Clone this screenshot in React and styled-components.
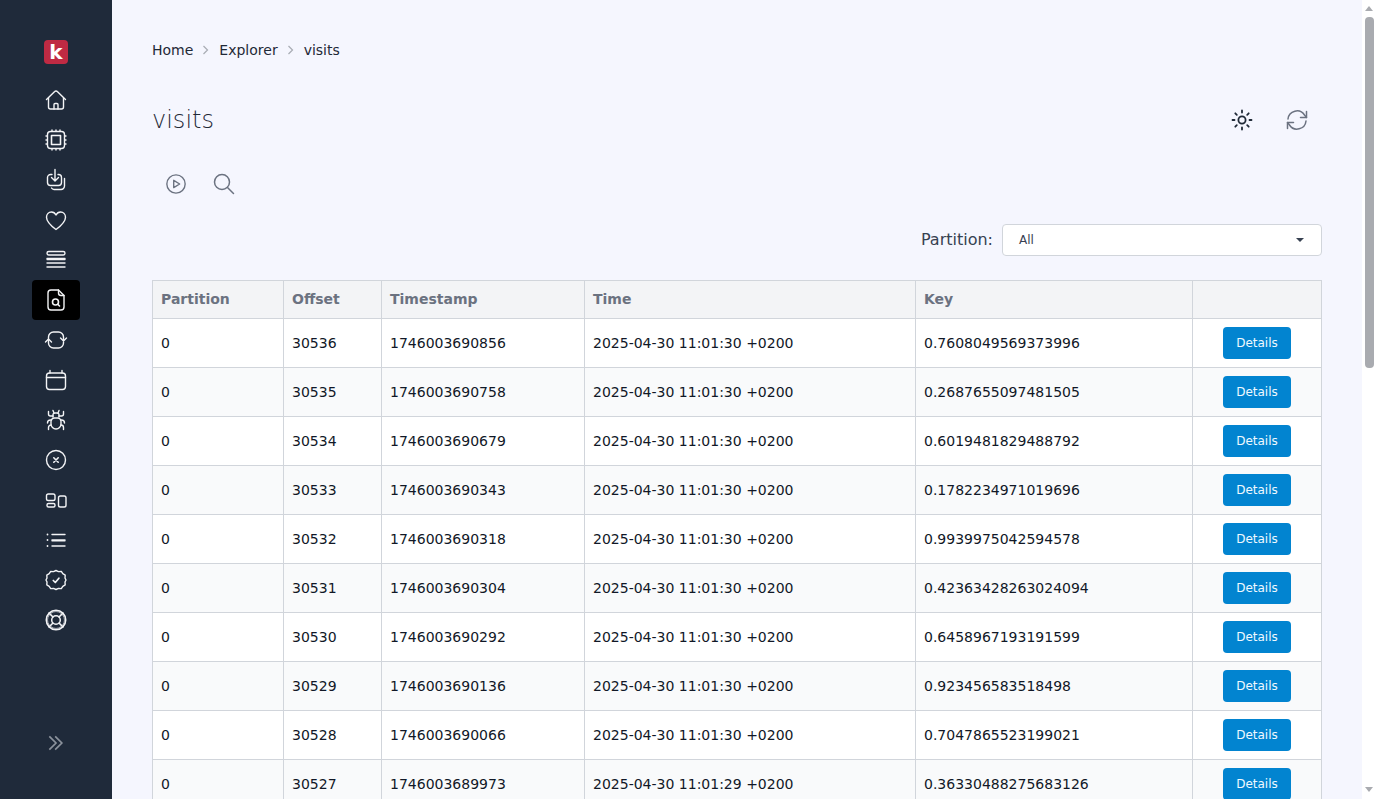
import React from 'react';
import styled, { createGlobalStyle } from 'styled-components';

const GlobalStyle = createGlobalStyle`
	html, body {
		margin: 0;
		padding: 0;
		height: 100%;
		overflow: hidden;
		background: #f5f6fe;
		font-family: "DejaVu Sans", sans-serif;
	}
`;

function Svg({ children }) {
	return (
		<svg width="24" height="24" viewBox="0 0 24 24" fill="none" stroke="currentColor" strokeWidth="1.4" strokeLinecap="round" strokeLinejoin="round">
			{children}
		</svg>
	);
}

const navIcons = [
	<Svg key="home">
		<path d="M2.500 11.500 10.700 3.500a1.800 1.800 0 0 1 2.600 0L21.500 11.500" />
		<path d="M4.500 10v9a2 2 0 0 0 2 2h11a2 2 0 0 0 2-2v-9" />
		<path d="M10 21v-4.500a1 1 0 0 1 1-1h2a1 1 0 0 1 1 1V21" />
	</Svg>,
	<Svg key="cpu">
		<rect x="3.500" y="3.500" width="17" height="17" rx="3" />
		<rect x="7.500" y="7.500" width="9" height="9" strokeWidth="1.600" />
		<path d="M8 2v1M12 2v1M16 2v1M8 21v1M12 21v1M16 21v1M2 8h1M2 12h1M2 16h1M21 8h1M21 12h1M21 16h1" />
	</Svg>,
	<Svg key="import">
		<path d="M8 6.500H6.500a3 3 0 0 0-3 3v5a3 3 0 0 0 3 3h8a3 3 0 0 0 3-3v-5a3 3 0 0 0-3-3H14" />
		<path d="M11 1.500v11M7.500 9.500l3.500 3.500 3.500-3.500" />
		<path d="M20.500 10.500v7.500a3.500 3.500 0 0 1-3.500 3.500h-7a3 3 0 0 1-2.500-1.500" />
	</Svg>,
	<Svg key="heart">
		<path d="M12 21.500C6 17 2.500 13.500 2.500 9.200 2.500 6 4.800 4 7.400 4c2 0 3.600 1 4.600 3 1-2 2.600-3 4.600-3 2.600 0 4.900 2 4.900 5.200 0 4.300-3.500 7.800-9.500 12.300z" />
	</Svg>,
	<Svg key="stack">
		<rect x="3" y="3.500" width="18" height="3.500" rx="1.750" />
		<path d="M3 10.500h18M3 11.500h18M3 15h18M3 19h18" />
	</Svg>,
	<Svg key="file-search">
		<path d="M14.500 2H7a3 3 0 0 0-3 3v14a3 3 0 0 0 3 3h10a3 3 0 0 0 3-3V7.500z" />
		<path d="M14.500 2v3a2.500 2.500 0 0 0 2.500 2.500h3" />
		<circle cx="11.500" cy="14" r="3" strokeWidth="1.600" />
		<path d="M13.800 16.300 15.500 18" strokeWidth="1.600" />
	</Svg>,
	<Svg key="sync">
		<path d="M4.500 10.500V9a5 5 0 0 1 5-5h5a5 5 0 0 1 5 5v3.500" />
		<path d="M16.500 10l3 3 3-3" />
		<path d="M19.500 14v1a5 5 0 0 1-5 5h-5a5 5 0 0 1-5-5v-3.500" />
		<path d="M1.500 14l3-3 3 3" />
	</Svg>,
	<Svg key="calendar">
		<rect x="2.500" y="5" width="19" height="16.500" rx="3" />
		<path d="M2.500 9.500h19M6 2.500V5M18 2.500V5" />
	</Svg>,
	<Svg key="bug">
		<path d="M9 9V6.800A1.800 1.800 0 0 1 10.800 5h2.400A1.800 1.800 0 0 1 15 6.800V9" />
		<path d="M7 13.500A3.500 3.500 0 0 1 10.500 10h3a3.500 3.500 0 0 1 3.500 3.500v2.500a5 5 0 0 1-10 0z" />
		<path d="M9 2.500 10 5M15 2.500 14 5M4.500 3.500v2.500a2 2 0 0 0 2 2H9M19.500 3.500v2.500a2 2 0 0 1-2 2H15M3.500 15a3 3 0 0 1 3-3H7.500M20.500 15a3 3 0 0 0-3-3h-1M4.500 21.500v-2a2.500 2.500 0 0 1 2.500-2.500M19.500 21.500v-2a2.500 2.500 0 0 0-2.500-2.500" />
	</Svg>,
	<Svg key="x-circle">
		<circle cx="12" cy="12" r="9.500" />
		<path d="M9.800 9.800l4.400 4.400M14.200 9.800l-4.400 4.400" strokeWidth="1.600" />
	</Svg>,
	<Svg key="layout">
		<rect x="2.500" y="6" width="8.500" height="6.500" rx="1.800" />
		<rect x="3" y="15.500" width="8" height="3.500" rx="1.500" />
		<rect x="14.500" y="8" width="7.500" height="11" rx="1.800" />
	</Svg>,
	<Svg key="list">
		<path d="M8 6.500h13M8 12h13M8 12.800h13M8 18h13" />
		<path d="M3.500 6.500h.01M3.500 12h.01M3.500 18h.01" strokeWidth="1.800" />
	</Svg>,
	<Svg key="check">
		<path d="M12 2.500l2.500 1.100 2.800-.2 1.500 2.300 2.400 1.500-.2 2.800 1 2-1 2 .2 2.800-2.400 1.500-1.500 2.300-2.800-.2-2.500 1.100-2.500-1.100-2.800.2-1.500-2.300-2.400-1.500.2-2.800-1-2 1-2-.2-2.800 2.400-1.500 1.500-2.300 2.800.2z" />
		<path d="M9.300 12.500l2 2 3.600-4.300" strokeWidth="1.700" />
	</Svg>,
	<Svg key="support">
		<circle cx="12" cy="12" r="9.700" strokeWidth="1.600" />
		<circle cx="12" cy="12" r="4.300" strokeWidth="1.500" />
		<path d="M5.100 5.100 9 9M18.900 5.100 15 9M5.100 18.900 9 15M18.900 18.900 15 15" strokeWidth="1.500" />
		<path d="M7 5.300a8.300 8.300 0 0 1 10 0M7 18.700a8.300 8.300 0 0 0 10 0M5.300 7a8.300 8.300 0 0 0 0 10M18.700 7a8.300 8.300 0 0 1 0 10" strokeWidth=".6" />
	</Svg>,
];

const rows = [
	['0', '30536', '1746003690856', '2025-04-30 11:01:30 +0200', '0.7608049569373996'],
	['0', '30535', '1746003690758', '2025-04-30 11:01:30 +0200', '0.2687655097481505'],
	['0', '30534', '1746003690679', '2025-04-30 11:01:30 +0200', '0.6019481829488792'],
	['0', '30533', '1746003690343', '2025-04-30 11:01:30 +0200', '0.1782234971019696'],
	['0', '30532', '1746003690318', '2025-04-30 11:01:30 +0200', '0.9939975042594578'],
	['0', '30531', '1746003690304', '2025-04-30 11:01:30 +0200', '0.42363428263024094'],
	['0', '30530', '1746003690292', '2025-04-30 11:01:30 +0200', '0.6458967193191599'],
	['0', '30529', '1746003690136', '2025-04-30 11:01:30 +0200', '0.923456583518498'],
	['0', '30528', '1746003690066', '2025-04-30 11:01:30 +0200', '0.7047865523199021'],
	['0', '30527', '1746003689973', '2025-04-30 11:01:29 +0200', '0.36330488275683126'],
];

const columns = ['Partition', 'Offset', 'Timestamp', 'Time', 'Key', ''];

export default function App() {
	return (
		<Layout>
			<GlobalStyle />
			<Sidebar>
				<Logo>k</Logo>
				<NavList>
					{navIcons.map((icon, i) => (
						<NavItem key={i} $active={i === 5}>
							{icon}
						</NavItem>
					))}
				</NavList>
				<CollapseButton>
					<svg width="20" height="20" viewBox="0 0 24 24" fill="none" stroke="currentColor" strokeWidth="2">
						<path d="M4 4l8 8-8 8M11 4l8 8-8 8" />
					</svg>
				</CollapseButton>
			</Sidebar>
			<Main>
				<Breadcrumbs>
					<span>Home</span>
					<Chevron />
					<span>Explorer</span>
					<Chevron />
					<span>visits</span>
				</Breadcrumbs>
				<TitleRow>
					<Title>visits</Title>
					<TitleActions>
						<IconButton $dark>
							<svg width="24" height="24" viewBox="0 0 24 24" fill="none" stroke="currentColor" strokeWidth="1.800" strokeLinecap="round">
								<circle cx="12" cy="12" r="3.600" />
								<path d="M12 2.500v2M12 19.500v2M2.500 12h2M19.500 12h2M5.300 5.300l1.500 1.500M17.200 17.200l1.500 1.500M5.300 18.700l1.500-1.500M17.200 6.800l1.500-1.500" />
							</svg>
						</IconButton>
						<IconButton>
							<svg width="24" height="24" viewBox="0 0 24 24" fill="none" stroke="currentColor" strokeWidth="1.500" strokeLinecap="round" strokeLinejoin="round">
								<path d="M3 11a9 9 0 0 1 16.500-4L21.500 9.500" />
								<path d="M21.500 3.500v6h-6" />
								<path d="M21 13a9 9 0 0 1-16.500 4l-2-2.500" />
								<path d="M2.500 20.500v-6h6" />
							</svg>
						</IconButton>
					</TitleActions>
				</TitleRow>
				<Toolbar>
					<ToolButton>
						<svg width="22" height="22" viewBox="0 0 24 24" fill="none" stroke="currentColor" strokeWidth="1.500" strokeLinejoin="round">
							<circle cx="12" cy="12" r="10" />
							<path d="M9.500 8v8l6.500-4z" />
						</svg>
					</ToolButton>
					<ToolButton>
						<svg width="24" height="24" viewBox="0 0 24 24" fill="none" stroke="currentColor" strokeWidth="1.500" strokeLinecap="round">
							<circle cx="10" cy="10" r="7.500" />
							<path d="M15.500 15.500l6 6" />
						</svg>
					</ToolButton>
				</Toolbar>
				<FilterRow>
					<FilterLabel>Partition:</FilterLabel>
					<Select>
						All
						<Caret />
					</Select>
				</FilterRow>
				<Table>
					<colgroup>
						<col width="131" />
						<col width="98" />
						<col width="203" />
						<col width="331" />
						<col width="277" />
						<col />
					</colgroup>
					<thead>
						<tr>
							{columns.map((c, i) => (
								<Th key={i}>{c}</Th>
							))}
						</tr>
					</thead>
					<tbody>
						{rows.map((row) => (
							<Row key={row[1]}>
								{row.map((value, i) => (
									<Td key={i}>{value}</Td>
								))}
								<ActionCell>
									<DetailsButton>Details</DetailsButton>
								</ActionCell>
							</Row>
						))}
					</tbody>
				</Table>
			</Main>
			<ScrollTrack>
				<ScrollArrow />
				<ScrollThumb />
				<ScrollArrow $down />
			</ScrollTrack>
		</Layout>
	);
}

function Chevron() {
	return (
		<ChevronIcon width="8" height="10" viewBox="0 0 8 10" fill="none" stroke="currentColor" strokeWidth="1.200">
			<path d="M1.500 1l4 4-4 4" />
		</ChevronIcon>
	);
}

const Layout = styled.div`
	display: flex;
	height: 100vh;
	overflow: hidden;
`;

const Sidebar = styled.nav`
	flex: 0 0 112px;
	box-sizing: border-box;
	display: flex;
	flex-direction: column;
	align-items: center;
	padding: 40px 0 46px;
	background: #1f2a3a;
	color: #f3f4f6;
`;

const Logo = styled.div`
	width: 24px;
	height: 24px;
	border-radius: 4px;
	background: #bf2a43;
	color: #ffffff;
	display: flex;
	align-items: center;
	justify-content: center;
	font: 700 20px/24px "DejaVu Sans", sans-serif;
`;

const NavList = styled.div`
	display: flex;
	flex-direction: column;
	margin-top: 16px;
`;

const NavItem = styled.div`
	width: 48px;
	height: 40px;
	display: flex;
	align-items: center;
	justify-content: center;
	border-radius: 4px;
	background: ${(props) => (props.$active ? '#000000' : 'transparent')};
`;

const CollapseButton = styled.div`
	margin-top: auto;
	height: 20px;
	color: #8b929c;

	svg {
		display: block;
	}
`;

const Main = styled.main`
	flex: 1;
	min-width: 0;
	box-sizing: border-box;
	padding: 40px 40px 0;
	overflow: hidden;
`;

const Breadcrumbs = styled.div`
	display: flex;
	align-items: center;
	height: 20px;
	font-size: 14px;
	line-height: 20px;
	color: #1f2937;
`;

const ChevronIcon = styled.svg`
	margin: 0 9px 0 9px;
	color: #a8acb3;
`;

const TitleRow = styled.div`
	display: flex;
	align-items: center;
	justify-content: space-between;
	margin-top: 36px;
	height: 48px;
`;

const Title = styled.h1`
	margin: 0;
	font-family: "DejaVu Sans", sans-serif;
	font-size: 24px;
	font-weight: 200;
	line-height: 32px;
	color: #1f2937;
`;

const TitleActions = styled.div`
	display: flex;
	align-items: center;
	gap: 31px;
	padding-right: 13px;
`;

const IconButton = styled.div`
	display: flex;
	color: ${(props) => (props.$dark ? '#1f2937' : '#6b7280')};
`;

const Toolbar = styled.div`
	display: flex;
	align-items: center;
	gap: 25px;
	margin-top: 24px;
	padding-left: 13px;
	height: 32px;
	color: #6b7280;
`;

const ToolButton = styled.div`
	display: flex;
`;

const FilterRow = styled.div`
	display: flex;
	align-items: center;
	justify-content: flex-end;
	gap: 9px;
	margin-top: 24px;
`;

const FilterLabel = styled.span`
	padding-bottom: 2px;
	font-size: 16px;
	color: #374151;
`;

const Select = styled.div`
	width: 320px;
	height: 32px;
	box-sizing: border-box;
	display: flex;
	align-items: center;
	justify-content: space-between;
	padding: 0 17px 0 16px;
	border: 1px solid #d1d5db;
	border-radius: 4px;
	background: #ffffff;
	font-size: 12px;
	color: #374151;
`;

const Caret = styled.i`
	width: 0;
	height: 0;
	border-left: 4px solid transparent;
	border-right: 4px solid transparent;
	border-top: 4px solid #374151;
`;

const Table = styled.table`
	width: 100%;
	margin-top: 24px;
	border-collapse: collapse;
	table-layout: fixed;
	font-size: 14px;
`;

const Th = styled.th`
	height: 35px;
	padding: 0 8px 2px;
	border: 1px solid #d1d5db;
	background: #f3f4f6;
	color: #6b7280;
	font-weight: 700;
	text-align: left;
`;

const Row = styled.tr`
	background: #ffffff;

	&:nth-child(even) {
		background: #f9fafb;
	}
`;

const Td = styled.td`
	height: 48px;
	padding: 0 8px;
	border: 1px solid #d1d5db;
	color: #111827;
`;

const ActionCell = styled(Td)`
	text-align: center;
`;

const DetailsButton = styled.button`
	width: 68px;
	height: 32px;
	padding: 0;
	border: 0;
	border-radius: 4px;
	background: #0284d0;
	color: #f0f9ff;
	font: 12px "DejaVu Sans", sans-serif;
	vertical-align: middle;
`;

const ScrollTrack = styled.div`
	flex: 0 0 15px;
	box-sizing: border-box;
	display: flex;
	flex-direction: column;
	justify-content: space-between;
	align-items: flex-start;
	padding: 6px 0 7px 3px;
	background: #ffffff;
`;

const ScrollArrow = styled.i`
	width: 0;
	height: 0;
	border-left: 4.5px solid transparent;
	border-right: 4.5px solid transparent;
	border-${(props) => (props.$down ? 'top' : 'bottom')}: 5px solid #a9abb0;
`;

const ScrollThumb = styled.div`
	width: 9px;
	height: 351px;
	margin: 6px 0 auto;
	border-radius: 4px;
	background: #a9abb0;
`;
